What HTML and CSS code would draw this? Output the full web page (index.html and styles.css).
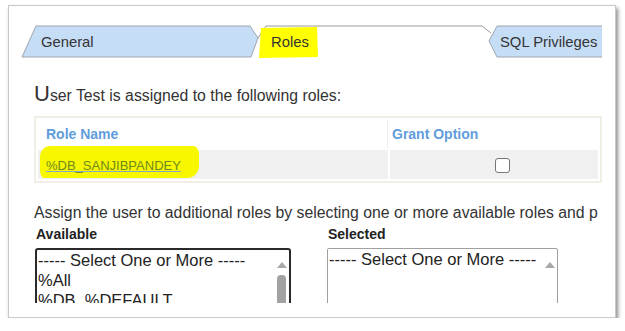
FILE: index.html
```html
<!DOCTYPE html>
<html>
<head>
<meta charset="utf-8">
<link rel="stylesheet" href="styles.css">
</head>
<body>
<div class="frame">
  <div class="content">
    <svg class="tabs" width="593" height="34" viewBox="0 0 593 34">
      <path d="M13,32 L27,1 L241,1 L249,13 L242,32 Z" fill="#c6ddf6" stroke="#9ea6ae" stroke-width="1"/>
      <path d="M249,13 L257,1 L473,1 L482,8" fill="none" stroke="#9a9a9a" stroke-width="1"/>
      <path d="M600,1 L488,1 L480,16 L488,32 L600,32" fill="#c6ddf6" stroke="#9ea6ae" stroke-width="1"/>
      <path d="M252,3 L308,2 L309,32 L250,33 Z" fill="#ffff00"/>
      <text x="32" y="22" class="tab-label">General</text>
      <text x="262" y="22" class="tab-label">Roles</text>
      <text x="491" y="22" class="tab-label">SQL Privileges</text>
    </svg>
    <h2 class="heading"><span class="cap">U</span>ser Test is assigned to the following roles:</h2>
    <table class="roles">
      <thead>
        <tr><th class="c1">Role Name</th><th class="c2">Grant Option</th></tr>
      </thead>
      <tbody>
        <tr>
          <td class="c1"><span class="hl"><a class="role-link" href="#">%DB_SANJIBPANDEY</a></span></td>
          <td class="c2"><span class="cb"></span></td>
        </tr>
      </tbody>
    </table>
    <p class="assign">Assign the user to additional roles by selecting one or more available roles and p</p>
    <div class="pickers">
      <div class="picker">
        <div class="plabel">Available</div>
        <div class="listbox avail">
          <div class="opts">
            <div>----- Select One or More -----</div>
            <div>%All</div>
            <div>%DB_%DEFAULT</div>
          </div>
          <div class="sbar"><span class="arrow"></span><span class="thumb"></span></div>
        </div>
      </div>
      <div class="picker">
        <div class="plabel">Selected</div>
        <div class="listbox sel">
          <div class="opts">
            <div>----- Select One or More -----</div>
          </div>
          <div class="sbar"><span class="arrow"></span></div>
        </div>
      </div>
    </div>
  </div>
</div>
</body>
</html>
```
FILE: styles.css
```css
html, body { margin: 0; padding: 0; background: #fff; }
body { font-family: "Liberation Sans", Arial, sans-serif; color: #333; }

.frame {
  margin: 5px 0 0 8px;
  width: 606px;
  height: 311px;
  border: 1px solid #c8c8c8;
  box-shadow: 2px 3px 4px rgba(0,0,0,0.45);
  background: #fff;
}
.content {
  width: 593px;
  height: 297px;
  overflow: hidden;
}
.tabs { display: block; margin-top: 19px; }
.tab-label { font-family: "Liberation Sans", Arial, sans-serif; font-size: 14.8px; fill: #333; }

.heading {
  margin: 25px 0 0 25px;
  font-size: 15.8px;
  font-weight: normal;
  line-height: 20px;
  color: #333;
  white-space: nowrap;
}
.heading .cap { font-size: 22px; }

.roles {
  margin: 10px 0 0 25px;
  width: 568px;
  border: 2px solid #f1eee6;
  border-collapse: separate;
  border-spacing: 2px;
}
.roles th, .roles td { padding: 0; text-align: left; }
.roles th {
  height: 28px;
  font-size: 14px;
  font-weight: bold;
  color: #5f9ddb;
  background: #fff;
  padding-left: 8px;
  vertical-align: middle;
}
.roles th.c1 { width: 341px; border-right: 1px solid #f1eee6; }
.roles th.c2 { padding-left: 2px; }
.roles td {
  height: 29px;
  background: #f0f0f0;
  vertical-align: middle;
}
.roles td.c1 { padding-left: 8px; }
.roles td.c2 { text-align: center; padding-left: 16px; }
.hl {
  display: inline-block;
  background: #f7f700;
  padding: 10px 18px 4px 6px;
  margin: -10px -18px -4px -6px;
  border-radius: 10px 6px 12px 4px / 10px 8px 12px 8px;
}
.role-link {
  font-size: 13px;
  color: #6e8a1e;
  text-decoration: underline;
  text-decoration-color: #8aa6c6;
}
.cb {
  display: inline-block;
  width: 13px;
  height: 13px;
  border: 1.5px solid #767676;
  border-radius: 3px;
  background: #fff;
  vertical-align: middle;
}

.assign {
  margin: 21px 0 0 25px;
  font-size: 15.8px;
  line-height: 18px;
  white-space: nowrap;
  color: #333;
}
.pickers {
  display: flex;
  gap: 36px;
  margin: 4px 0 0 26px;
}
.plabel {
  font-size: 14px;
  font-weight: bold;
  color: #222;
  line-height: 16px;
  margin: 0 0 6px 1px;
}
.listbox {
  display: flex;
  height: 70px;
  background: #fff;
  font-size: 16.5px;
  line-height: 20px;
  color: #222;
}
.listbox.avail { width: 252px; border: 2px solid #2a2a2a; border-radius: 3px; }
.listbox.sel { width: 229px; border: 1px solid #a0a0a0; border-radius: 2px; }
.opts { flex: 1; padding: 0 0 0 1px; white-space: nowrap; overflow: hidden; }
.sbar {
  width: 15px;
  display: flex;
  flex-direction: column;
  align-items: center;
  padding-top: 12px;
  gap: 7px;
}
.arrow {
  width: 0; height: 0;
  border-left: 5px solid transparent;
  border-right: 5px solid transparent;
  border-bottom: 6px solid #a8a8a8;
}
.thumb {
  width: 9px;
  height: 40px;
  background: #a2a2a2;
  border-radius: 4px;
}
.listbox.sel .sbar { padding-top: 13px; }
```
